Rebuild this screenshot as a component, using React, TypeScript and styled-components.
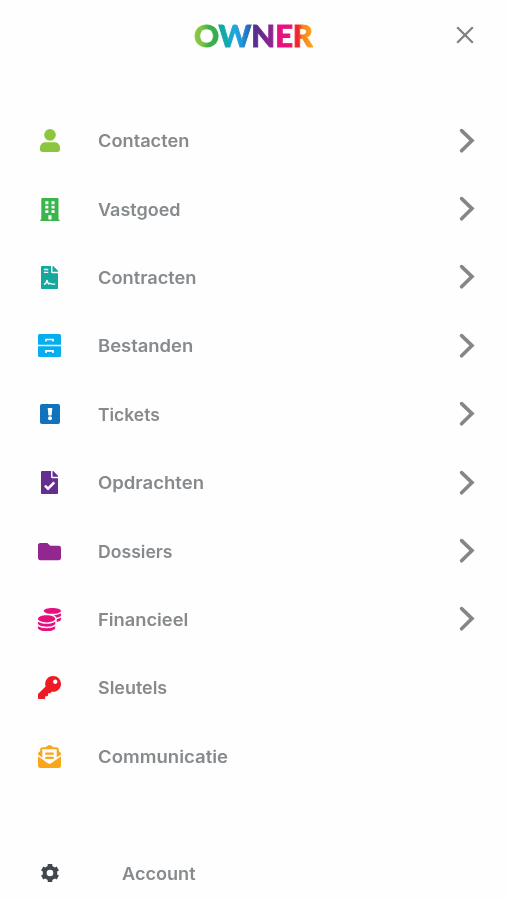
import React from "react";
import styled, { createGlobalStyle } from "styled-components";
import { FaFolder, FaCoins, FaKey, FaEnvelopeOpenText } from "react-icons/fa";

const GlobalStyle = createGlobalStyle`
  * { box-sizing: border-box; }
  body { margin: 0; background: #fefefe; }
`;

const Menu = styled.div`
  width: 507px;
  height: 900px;
  overflow: hidden;
  background: #fefefe;
  font-family: Inter, sans-serif;
`;

const Header = styled.header`
  display: grid;
  grid-template-columns: 1fr auto 1fr;
  align-items: center;
  height: 70px;
  padding: 0 33px;
`;

const Logo = styled.div`
  grid-column: 2;
  font: 900 31px/40px Lato, sans-serif;
  letter-spacing: -0.1px;
  color: transparent;
  -webkit-text-stroke: 0.9px transparent;
  background: linear-gradient(90deg,
    #8dc63f 0%, #7fc242 7%, #3fae49 12%, #35ae4a 19%,
    #10a9a0 22%, #12a9b5 29%, #22a7df 34%, #2196d8 40%, #2465b5 47%,
    #57308f 50%, #642a8d 56%, #8c268f 64%, #90268f 68%,
    #e6127f 70%, #e6127f 79%, #ea1b3f 83%, #ef2b27 88%, #f58220 91%, #fba61c 100%);
  background-clip: text;
  -webkit-background-clip: text;
`;

const Close = styled.button`
  justify-self: end;
  display: flex;
  padding: 0;
  border: 0;
  background: none;
  color: #7d8285;
`;

const List = styled.nav`
  display: grid;
  grid-auto-rows: 68.4px;
  padding-top: 36.5px;
`;

const Row = styled.div<{ $account?: boolean }>`
  display: grid;
  grid-template-columns: 24px 1fr 16px;
  column-gap: ${p => (p.$account ? 60.5 : 36)}px;
  align-items: center;
  height: 68.4px;
  margin-top: ${p => (p.$account ? 48.5 : 0)}px;
  padding: 0 32.5px 0 37.5px;
`;

const Icon = styled.span<{ $color: string }>`
  display: flex;
  justify-content: center;
  color: ${p => p.$color};
`;

const Label = styled.span<{ $stretch: number }>`
  justify-self: start;
  padding-top: 1px;
  font-size: 17px;
  line-height: 24px;
  font-weight: 600;
  color: #868a8d;
  transform: scaleX(${p => p.$stretch});
  transform-origin: left center;
`;

const Chevron = () => (
  <svg width="16" height="26" viewBox="0 0 16 26" fill="none" stroke="#868686" strokeWidth="3.6" strokeLinecap="round">
    <path d="M2.6 2.6 13 12.6 2.6 22.8" />
  </svg>
);

const Person = () => (
  <svg width="20" height="23" viewBox="0 0 20 23" fill="currentColor">
    <circle cx="10" cy="5.9" r="5.8" />
    <path d="M5.5 13.2h9A5.3 5.3 0 0 1 20 18.5v2.3a2.1 2.1 0 0 1-2.1 2.1H2.1A2.1 2.1 0 0 1 0 20.8v-2.3a5.3 5.3 0 0 1 5.5-5.3Z" />
  </svg>
);

const Building = () => (
  <svg width="20" height="23" viewBox="0 0 20 23">
    <path d="M2.3 0h15.2q1 0 1 1v20.4h1V23H.4v-1.6h.9V1q0-1 1-1Z" fill="currentColor" />
    <path d="M5.3 3.3h3.1v2.9H5.3Zm6.2 0h3.1v2.9h-3.1ZM5.3 7.8h3.1v2.8H5.3Zm6.2 0h3.1v2.8h-3.1ZM5.3 12.2h3.1V15H5.3Zm6.2 0h3.1V15h-3.1ZM8.4 17.2h3.1v4.3H8.4Z" fill="#fff" />
  </svg>
);

const FileSignature = () => (
  <svg width="17.25" height="23" viewBox="0 0 384 512" fill="currentColor">
    <path d="M224 136V0H24C10.7 0 0 10.7 0 24v464c0 13.3 10.7 24 24 24h336c13.3 0 24-10.7 24-24V160H248c-13.2 0-24-10.8-24-24zm160-14.1v6.1H256V0h6.1c6.4 0 12.5 2.5 17 7l97.9 98c4.5 4.5 7 10.6 7 16.9z" />
    <path d="M64 78h98M64 141h98M65 400h22q16 0 21-15l23-66 33 76q5 10 16 0 14-19 33-6 14 13 29 13h75" fill="none" stroke="#fff" strokeWidth="30" strokeLinejoin="round" />
  </svg>
);

const Cabinet = () => (
  <svg width="23" height="23" viewBox="0 0 23 23" fill="currentColor">
    <path d="M1.5 0h20A1.5 1.5 0 0 1 23 1.5V10.7H0V1.5A1.5 1.5 0 0 1 1.5 0ZM0 12.2h23v9.3a1.5 1.5 0 0 1-1.5 1.5h-20A1.5 1.5 0 0 1 0 21.5Z" />
    <path d="M8 7.5V5.5h7v2M8 18.9v-2h7v2" fill="none" stroke="#fff" strokeWidth="1.7" />
  </svg>
);

const AlertSquare = () => (
  <svg width="20" height="20" viewBox="0 0 20 20">
    <rect width="20" height="20" rx="2" fill="currentColor" />
    <path d="M7.7 4h4.6l-.7 7.6H8.4Z" fill="#fff" />
    <circle cx="10" cy="14.2" r="2" fill="#fff" />
  </svg>
);

const FileCheck = () => (
  <svg width="17.25" height="23" viewBox="0 0 384 512" fill="currentColor">
    <path d="M224 136V0H24C10.7 0 0 10.7 0 24v464c0 13.3 10.7 24 24 24h336c13.3 0 24-10.7 24-24V160H248c-13.2 0-24-10.8-24-24zm160-14.1v6.1H256V0h6.1c6.4 0 12.5 2.5 17 7l97.9 98c4.5 4.5 7 10.6 7 16.9z" />
    <path d="m88 325 69 69 139-139" fill="none" stroke="#fff" strokeWidth="57" />
  </svg>
);

const Gear = () => (
  <svg width="20" height="20" viewBox="0 0 20 20" fill="none" stroke="currentColor">
    <circle cx="10" cy="10" r="5.3" strokeWidth="4" />
    <path d="M10 1v3M10 16v3M2.2 5.5l2.6 1.5M15.2 13l2.6 1.5M2.2 14.5 4.8 13M15.2 7l2.6-1.5" strokeWidth="4.6" />
  </svg>
);

const items = [
  { label: "Contacten", color: "#8cc63f", icon: <Person />, stretch: 1.071, more: true },
  { label: "Vastgoed", color: "#39b54a", icon: <Building />, stretch: 1.058, more: true },
  { label: "Contracten", color: "#16a79d", icon: <FileSignature />, stretch: 1.073, more: true },
  { label: "Bestanden", color: "#05aeef", icon: <Cabinet />, stretch: 1.084, more: true },
  { label: "Tickets", color: "#1074bc", icon: <AlertSquare />, stretch: 1.028, more: true },
  { label: "Opdrachten", color: "#662d91", icon: <FileCheck />, stretch: 1.09, more: true },
  { label: "Dossiers", color: "#92278f", icon: <FaFolder size={23} />, stretch: 1.037, more: true },
  { label: "Financieel", color: "#e5127d", icon: <FaCoins size={23} />, stretch: 1.076, more: true },
  { label: "Sleutels", color: "#ed1c24", icon: <FaKey size={23} />, stretch: 1.054, more: false },
  { label: "Communicatie", color: "#f9a61a", icon: <FaEnvelopeOpenText size={23} />, stretch: 1.092, more: false },
];

export default function App() {
  return (
    <Menu>
      <GlobalStyle />
      <Header>
        <Logo>OWNER</Logo>
        <Close aria-label="Sluiten">
          <svg width="18" height="18" viewBox="0 0 18 18" fill="none" stroke="currentColor" strokeWidth="2.3">
            <path d="m1.2 1.2 15.6 15.6M16.8 1.2 1.2 16.8" />
          </svg>
        </Close>
      </Header>
      <List>
        {items.map(item => (
          <Row key={item.label}>
            <Icon $color={item.color}>{item.icon}</Icon>
            <Label $stretch={item.stretch}>{item.label}</Label>
            {item.more && <Chevron />}
          </Row>
        ))}
      </List>
      <Row $account>
        <Icon $color="#42474d"><Gear /></Icon>
        <Label $stretch={1.065}>Account</Label>
      </Row>
    </Menu>
  );
}
